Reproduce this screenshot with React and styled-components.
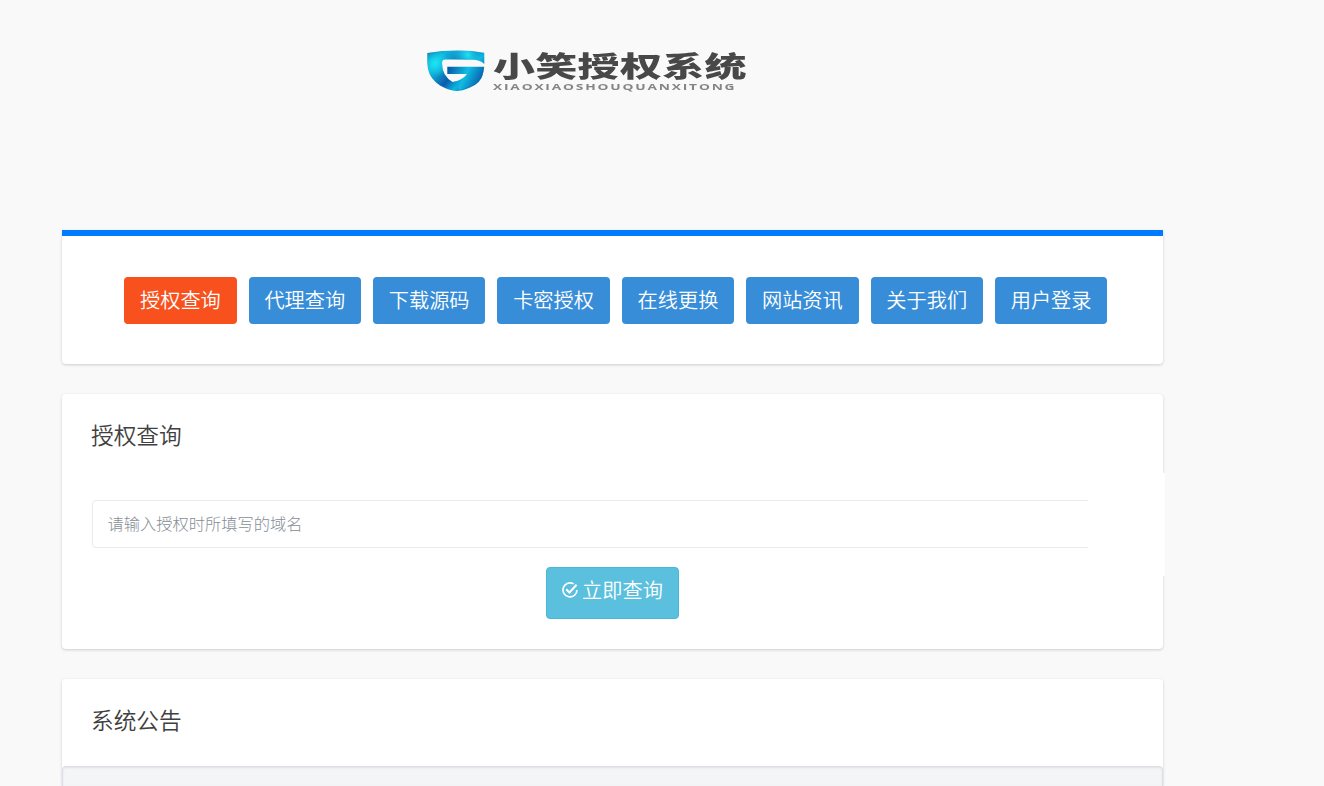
import React from "react";
import styled, { createGlobalStyle } from "styled-components";

// Styles
const GlobalStyle = createGlobalStyle`
  * {
    box-sizing: border-box;
  }

  body {
    margin: 0;
    height: 786px;
    overflow: hidden;
    background: #f9f9f9;
    color: #404040;
    font-family: "Noto Sans CJK SC", sans-serif;
    font-weight: 350;
  }
`;

const Page = styled.main`
  width: 1101px;
  height: 786px;
  margin-left: 62px;
`;

const Header = styled.header`
  height: 230px;
  padding: 45px 0 0 360px;
`;

const LogoImage = styled.svg`
  display: block;
  width: 330px;
  height: 50px;
  overflow: visible;
  filter: blur(0.5px);
`;

const Card = styled.section`
  position: relative;
  height: ${(props) => props.$height}px;
  margin-bottom: ${(props) => (props.$last ? 0 : 30)}px;
  background: #fff;
  border-radius: ${(props) => (props.$last ? "4px 4px 0 0" : "4px")};
  box-shadow: 0 1px 3px rgba(0, 0, 0, 0.18);
`;

const NavCard = styled(Card)`
  padding: 41px 55.7px 0 62.2px;
  border-top: 6px solid #007bff;
  border-radius: 0 0 4px 4px;
`;

const Nav = styled.nav`
  display: flex;
  justify-content: space-between;
`;

const NavButton = styled.button`
  width: 112.4px;
  height: 47px;
  padding: 0 0 2px;
  border: 0;
  border-radius: 4px;
  background: ${(props) => (props.$active ? "#f8511d" : "#378dd8")};
  color: #fff;
  font: 350 20.2px/45px "Noto Sans CJK SC", sans-serif;
  white-space: nowrap;
  cursor: pointer;
`;

const CardTitle = styled.h2`
  margin: 0;
  padding: 26px 29px 0;
  font-size: 22.7px;
  font-weight: 350;
  line-height: 30px;
`;

const QueryForm = styled.form`
  display: flex;
  flex-direction: column;
  align-items: center;
  padding: 50px 30px 0;
`;

const DomainInput = styled.input`
  width: 100%;
  height: 48px;
  padding: 0 15px 2px 14.5px;
  border: 1px solid #ebebeb;
  border-radius: 4px;
  background: #fff;
  font: 300 16.25px "Noto Sans CJK SC", sans-serif;

  &::placeholder {
    color: #868e96;
    opacity: 1;
  }
`;

// Covers the right end of the input and the card edge
const InputCover = styled.div`
  position: absolute;
  top: 79px;
  right: -2px;
  width: 77px;
  height: 103px;
  background: #fff;
`;

const SubmitButton = styled.button`
  display: flex;
  align-items: center;
  justify-content: center;
  gap: 4px;
  width: 133px;
  height: 52px;
  margin-top: 19px;
  padding: 0 0 7px;
  border: 1px solid #46b8da;
  border-radius: 4px;
  background: #5bc0de;
  color: #fff;
  font: 350 20.2px/43px "Noto Sans CJK SC", sans-serif;
  white-space: nowrap;
  cursor: pointer;
`;

const NoticeBody = styled.div`
  height: 20px;
  margin-top: 31px;
  border: 1px solid #dcdfe6;
  border-bottom: 0;
  border-radius: 4px 4px 0 0;
  background: #f4f5f7;
  box-shadow: inset 0 1px 2px rgba(0, 0, 40, 0.08);
`;

const navItems = [
  "授权查询",
  "代理查询",
  "下载源码",
  "卡密授权",
  "在线更换",
  "网站资讯",
  "关于我们",
  "用户登录",
];

// Components
const Logo = () => (
  <LogoImage viewBox="0 0 330 50" role="img" aria-label="小笑授权系统">
    <defs>
      <linearGradient
        id="shield"
        gradientUnits="userSpaceOnUse"
        x1="8"
        y1="6"
        x2="52"
        y2="44"
      >
        <stop offset="0" stopColor="#0a76b0" />
        <stop offset="0.2" stopColor="#10b4dc" />
        <stop offset="0.34" stopColor="#0f9fd0" />
        <stop offset="0.56" stopColor="#0a5aac" />
        <stop offset="0.74" stopColor="#0cb4e0" />
        <stop offset="1" stopColor="#0862ae" />
      </linearGradient>
      <radialGradient
        id="glow"
        gradientUnits="userSpaceOnUse"
        cx="46"
        cy="10"
        r="15"
      >
        <stop offset="0" stopColor="#1ce6f4" />
        <stop offset="1" stopColor="#1ce6f4" stopOpacity="0" />
      </radialGradient>
      <radialGradient
        id="glowLeft"
        gradientUnits="userSpaceOnUse"
        cx="13"
        cy="18"
        r="14"
      >
        <stop offset="0" stopColor="#1ce6f4" />
        <stop offset="1" stopColor="#1ce6f4" stopOpacity="0" />
      </radialGradient>
      <linearGradient id="bar" x1="0" y1="0" x2="1" y2="0.3">
        <stop offset="0" stopColor="#0650a2" />
        <stop offset="0.55" stopColor="#10bce2" />
        <stop offset="1" stopColor="#0762ae" />
      </linearGradient>
    </defs>
    {["shield", "glow", "glowLeft"].map((fill) => (
      <path
        key={fill}
        d="M5.3 8Q34 3.4 62.3 7.7V19Q58 14.7 49 14.6H23Q20 14.6 20 18Q20 31 30.7 37Q41 36.5 45 29H61Q59 38 48 42.5Q40 46 34.3 46Q27 45.5 18 40.5Q8 34 6 24Q5 17 5.3 8Z"
        fill={`url(#${fill})`}
      />
    ))}
    <path
      d="M25.3 21.7H62.2Q62 32 53 38.5Q46 43 38 45Q34 41 30.7 37Q40 35.5 45.3 29H25.3Z"
      fill="url(#bar)"
    />
    <text
      transform="translate(71 32) scale(1.5 1)"
      fontFamily="Noto Sans CJK SC, sans-serif"
      fontSize="28"
      fontWeight="900"
      fill="#484848"
      textLength="169"
    >
      小笑授权系统
    </text>
    <text
      transform="translate(71 44.6) scale(1.6 1)"
      fontFamily="Open Sans, sans-serif"
      fontSize="8.6"
      fontWeight="700"
      fill="#858585"
      textLength="151"
    >
      XIAOXIAOSHOUQUANXITONG
    </text>
  </LogoImage>
);

const CheckIcon = () => (
  <svg
    width="16"
    height="16"
    viewBox="0 0 16 16"
    fill="none"
    stroke="currentColor"
    strokeWidth="1.6"
  >
    <path d="M11.6 1.9A7 7 0 1 0 15 8" />
    <path d="M4.2 7.3L7.4 10.5L14.6 2.8" strokeWidth="2" />
  </svg>
);

const App = () => {
  return (
    <>
      <GlobalStyle />
      <Page>
        <Header>
          <Logo />
        </Header>
        <NavCard $height={134}>
          <Nav>
            {navItems.map((item, index) => (
              <NavButton key={item} $active={index === 0}>
                {item}
              </NavButton>
            ))}
          </Nav>
        </NavCard>
        <Card $height={255}>
          <CardTitle>授权查询</CardTitle>
          <QueryForm onSubmit={(e) => e.preventDefault()}>
            <DomainInput placeholder="请输入授权时所填写的域名" />
            <SubmitButton>
              <CheckIcon />
              立即查询
            </SubmitButton>
          </QueryForm>
          <InputCover />
        </Card>
        <Card $height={107} $last>
          <CardTitle>系统公告</CardTitle>
          <NoticeBody />
        </Card>
      </Page>
    </>
  );
};

export default App;
